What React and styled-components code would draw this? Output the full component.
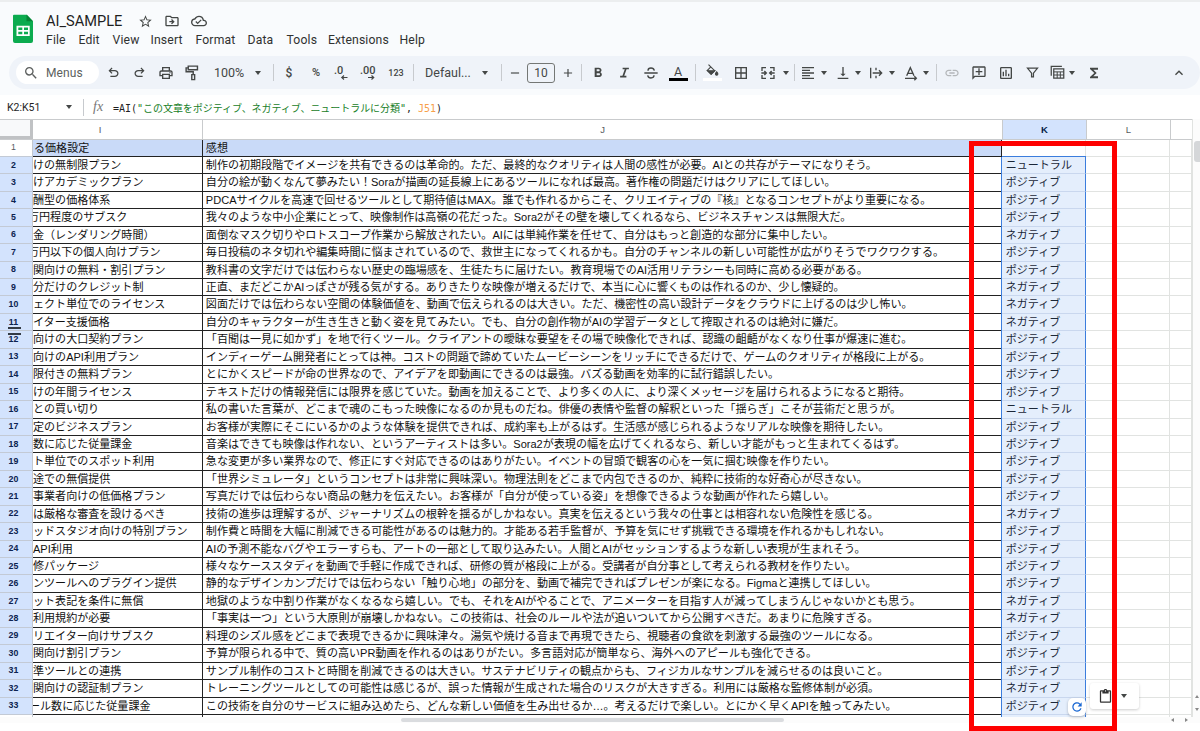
import React from "react";
import styled, { createGlobalStyle } from "styled-components";
import {
  MdAdd,
  MdBorderAll,
  MdContentPaste,
  MdFormatAlignLeft,
  MdFormatBold,
  MdFunctions,
  MdKeyboardArrowUp,
  MdLink,
  MdOutlineAddComment,
  MdOutlineCloudDone,
  MdOutlineDriveFileMove,
  MdOutlineInsertChart,
  MdOutlinePrint,
  MdRefresh,
  MdRemove,
  MdSearch,
  MdStarBorder,
  MdVerticalAlignBottom,
} from "react-icons/md";

const color = {
  ink: "#444746",
  line: "#e1e3e1",
  select: "#d3e3fd",
  blue: "#3b7ddd",
};

const ROW = 17.44;

const GlobalStyle = createGlobalStyle`
  * {
    box-sizing: border-box;
  }

  body {
    margin: 0;
    background: #fff;
    overflow: hidden;
    font-family: Roboto, "Noto Sans CJK JP", sans-serif;
  }
`;

const Page = styled.div`
  position: relative;
  width: 1200px;
  height: 731px;
  display: flex;
  flex-direction: column;
  overflow: hidden;
`;

const Top = styled.header`
  height: 95px;
  flex: none;
  background: #f9fbfd;
  border-top: 2px solid #eceeef;
`;

const TitleArea = styled.div`
  display: flex;
  height: 54px;
  padding: 10px 0 0 12px;
`;

const TitleText = styled.div`
  margin-left: 12px;
  color: #1f1f1f;
`;

const TitleLine = styled.div`
  display: flex;
  align-items: center;
  height: 18px;
  gap: 11px;

  svg {
    color: ${color.ink};
  }
`;

const FileName = styled.span`
  width: 81px;
  font-size: 14.6px;
  white-space: nowrap;
`;

const MenuLine = styled.nav`
  display: flex;
  height: 20px;
  align-items: center;
  font-size: 12.2px;
  color: #303231;
`;

const MenuItem = styled.span`
  width: ${({ $w }) => $w}px;
  letter-spacing: 0.15px;
`;

const ToolBar = styled.div`
  display: flex;
  align-items: center;
  height: 33px;
  margin-left: 9px;
  padding-left: 7px;
  background: #eff3f9;
  border-radius: 17px;
  color: ${color.ink};
`;

const Search = styled.div`
  display: flex;
  align-items: center;
  width: 83px;
  height: 23px;
  padding-left: 7px;
  gap: 7px;
  background: #fff;
  border-radius: 12px;
  font-size: 12px;
  letter-spacing: 0.1px;
  color: #5c5f5e;
`;

const Tool = styled.span`
  display: flex;
  flex: none;
  align-items: center;
  justify-content: center;
  width: ${({ $w }) => $w || 16}px;
  height: 20px;
  margin-left: ${({ $gap }) => $gap}px;
  font-size: ${({ $size }) => $size || 12}px;
  font-weight: ${({ $bold }) => ($bold ? 500 : 400)};
  color: ${({ $dim }) => ($dim ? "#b4b7ba" : "inherit")};
  white-space: nowrap;

  svg {
    flex: none;
  }
`;

const Separator = styled.i`
  flex: none;
  width: 1px;
  height: 17px;
  margin-left: ${({ $gap }) => $gap}px;
  background: #c7cace;
`;

const Caret = styled.i`
  flex: none;
  width: 0;
  margin: 0 1px 0 ${({ $gap }) => $gap + 1}px;
  border: 3px solid transparent;
  border-top: 4px solid ${color.ink};
  border-bottom: 0;
`;

const FontSize = styled(Tool)`
  border: 1px solid #747775;
  border-radius: 3px;
`;

const Swatch = styled.span`
  display: flex;
  flex-direction: column;
  align-items: center;
  width: 19px;
  font-size: 12.5px;
  line-height: 13px;

  &::after {
    content: "";
    width: 100%;
    height: 3px;
    background: ${({ $fill }) => $fill};
  }
`;

const FormulaBar = styled.div`
  display: flex;
  align-items: center;
  flex: none;
  width: 1189px;
  height: 24px;
  background: #fff;
  font-size: 10.5px;
  color: #1f1f1f;
`;

const CellName = styled.span`
  width: 59px;
  padding-left: 7px;
`;

const Fx = styled.span`
  width: 20px;
  margin-left: 9px;
  font: italic 14px "Liberation Serif", serif;
  color: #777;
`;

const Formula = styled.span`
  font: 10px "DejaVu Sans Mono", "Noto Sans CJK JP", monospace;
  white-space: pre;
`;

const Quoted = styled.span`
  color: #188028;
  letter-spacing: -0.05px;
`;

const Ref = styled.span`
  color: #f7a04b;
`;

const SheetArea = styled.main`
  display: flex;
  flex: none;
  height: 598px;
  overflow: hidden;
`;

const Sheet = styled.div`
  position: relative;
  width: 1193px;
  border-right: 1px solid ${color.line};
  overflow: hidden;
`;

const HeadRow = styled.div`
  display: flex;
  height: 20.5px;
  border-top: 1px solid #c9cbcd;
  border-bottom: 1px solid #c9cbcd;
`;

const Corner = styled.div`
  width: 33px;
  background: #f8f9fa;
  border-right: 3px solid #c0c2c4;
  border-bottom: 3px solid #c0c2c4;
`;

const ColHead = styled.div`
  display: flex;
  align-items: center;
  justify-content: center;
  width: ${({ $w }) => $w}px;
  padding-right: ${({ $cut }) => $cut || 0}px;
  border-right: 1px solid #c9cbcd;
  background: ${({ $on }) => ($on ? color.select : "#fff")};
  color: ${({ $on }) => ($on ? "#041e49" : "#575b5f")};
  font: ${({ $on }) => ($on ? 700 : 400)} 9.5px "Liberation Sans", sans-serif;
`;

const Row = styled.div`
  display: flex;
  height: ${ROW}px;
`;

const RowHead = styled.div`
  display: flex;
  align-items: center;
  width: 33px;
  justify-content: center;
  padding: 0 5px 1px 0;
  border-right: 1px solid #c3c8d0;
  border-bottom: 1px solid #c3cad5;
  background: ${({ $on }) => ($on ? color.select : "#fff")};
  color: ${({ $on }) => ($on ? "#0c2350" : "#575b5f")};
  font: ${({ $on }) => ($on ? 700 : 400)} 8.8px "Liberation Sans", sans-serif;
`;

const Cell = styled.div`
  width: ${({ $w }) => $w}px;
  padding-left: ${({ $pad }) => $pad || 0}px;
  overflow: hidden;
  border-right: 1px solid ${({ $dark }) => ($dark ? "#222" : color.line)};
  border-bottom: 1px solid ${({ $dark }) => ($dark ? "#222" : color.line)};
  background: ${({ $head }) => ($head ? "#c9daf8" : "transparent")};
  color: #111;
  font: 11.06px/16.6px "Liberation Sans", "Noto Sans CJK JP", sans-serif;
  white-space: nowrap;
`;

const Shift = styled.span`
  margin-left: ${({ $x }) => $x}px;
`;

const Picked = styled(Cell)`
  border-right-color: ${color.blue};
  border-bottom-color: #c9d7ee;
  background: #e4eefc;
  color: #1b2738;
  box-shadow: -1px 0 0 ${color.blue}, ${({ $first }) => ($first ? `0 -1px 0 ${color.blue}` : "0 0 0 transparent")};
`;

const FreezeMark = styled.div`
  position: absolute;
  left: 8px;
  top: 208px;
  width: 13px;
  height: 8px;
  border-top: 2px solid #333b45;
  border-bottom: 2px solid #333b45;
`;

const VScroll = styled.div`
  display: flex;
  flex-direction: column;
  align-items: center;
  width: 7px;
  padding-top: 22px;
  background: #fcfcfc;
`;

const VThumb = styled.div`
  flex: none;
  width: 6px;
  height: 21px;
  margin-bottom: 533px;
  margin-left: 1px;
  border-radius: 3px 0 0 3px;
  background: #d5d7d9;
`;

const ScrollArrow = styled.i`
  flex: none;
  width: 0;
  margin-bottom: 10px;
  border: 2.5px solid transparent;
  border-top: ${({ $up }) => ($up ? "0" : "3px solid #888")};
  border-bottom: ${({ $up }) => ($up ? "3px solid #888" : "0")};
`;

const HScroll = styled.div`
  display: flex;
  align-items: center;
  height: 6px;
  padding-left: 401px;
  background: #fcfcfc;
`;

const HThumb = styled.div`
  width: 383px;
  height: 4px;
  margin-right: 387px;
  border-radius: 2px;
  background: #dadcdf;
`;

const SideArrow = styled.i`
  width: 0;
  margin-right: 11px;
  border: 2.5px solid transparent;
  border-left: ${({ $right }) => ($right ? "3px solid #888" : "0")};
  border-right: ${({ $right }) => ($right ? "0" : "3px solid #888")};
`;

const PasteChip = styled.div`
  position: absolute;
  left: 1090px;
  top: 683px;
  display: flex;
  align-items: center;
  width: 49px;
  height: 26px;
  padding-left: 8px;
  border-radius: 3px;
  background: #fff;
  box-shadow: 0 1px 3px rgba(0, 0, 0, 0.2);
  color: #333;
`;

const RefreshChip = styled.div`
  position: absolute;
  left: 1068px;
  top: 698px;
  display: flex;
  align-items: center;
  justify-content: center;
  width: 18px;
  height: 18px;
  border-radius: 5px;
  background: #fff;
  box-shadow: 0 1px 3px rgba(0, 0, 0, 0.25);
  color: #1967d2;
`;

const Highlight = styled.div`
  position: absolute;
  left: 969px;
  top: 141px;
  width: 148px;
  height: 590px;
  border: 5px solid #fe0000;
`;

const menus = [
  ["File", 32.5],
  ["Edit", 34],
  ["View", 38],
  ["Insert", 45],
  ["Format", 52],
  ["Data", 39],
  ["Tools", 41.5],
  ["Extensions", 71.5],
  ["Help", 30],
];

// [column I, column J, column K, shift of the cut off column I text]
const P = "ポジティブ";
const N = "ネガティブ";
const U = "ニュートラル";
const rows = [
  ["けの無制限プラン", "制作の初期段階でイメージを共有できるのは革命的。ただ、最終的なクオリティは人間の感性が必要。AIとの共存がテーマになりそう。", U],
  ["けアカデミックプラン", "自分の絵が動くなんて夢みたい！Soraが描画の延長線上にあるツールになれば最高。著作権の問題だけはクリアにしてほしい。", P],
  ["酬型の価格体系", "PDCAサイクルを高速で回せるツールとして期待値はMAX。誰でも作れるからこそ、クリエイティブの『核』となるコンセプトがより重要になる。", P],
  ["万円程度のサブスク", "我々のような中小企業にとって、映像制作は高嶺の花だった。Sora2がその壁を壊してくれるなら、ビジネスチャンスは無限大だ。", P, -5],
  ["金（レンダリング時間）", "面倒なマスク切りやロトスコープ作業から解放されたい。AIには単純作業を任せて、自分はもっと創造的な部分に集中したい。", N],
  ["万円以下の個人向けプラン", "毎日投稿のネタ切れや編集時間に悩まされているので、救世主になってくれるかも。自分のチャンネルの新しい可能性が広がりそうでワクワクする。", P, -5],
  ["関向けの無料・割引プラン", "教科書の文字だけでは伝わらない歴史の臨場感を、生徒たちに届けたい。教育現場でのAI活用リテラシーも同時に高める必要がある。", P],
  ["分だけのクレジット制", "正直、まだどこかAIっぽさが残る気がする。ありきたりな映像が増えるだけで、本当に心に響くものは作れるのか、少し懐疑的。", N],
  ["ェクト単位でのライセンス", "図面だけでは伝わらない空間の体験価値を、動画で伝えられるのは大きい。ただ、機密性の高い設計データをクラウドに上げるのは少し怖い。", N],
  ["イター支援価格", "自分のキャラクターが生き生きと動く姿を見てみたい。でも、自分の創作物がAIの学習データとして搾取されるのは絶対に嫌だ。", N],
  ["向けの大口契約プラン", "「百聞は一見に如かず」を地で行くツール。クライアントの曖昧な要望をその場で映像化できれば、認識の齟齬がなくなり仕事が爆速に進む。", P],
  ["向けのAPI利用プラン", "インディーゲーム開発者にとっては神。コストの問題で諦めていたムービーシーンをリッチにできるだけで、ゲームのクオリティが格段に上がる。", P],
  ["限付きの無料プラン", "とにかくスピードが命の世界なので、アイデアを即動画にできるのは最強。バズる動画を効率的に試行錯誤したい。", P],
  ["けの年間ライセンス", "テキストだけの情報発信には限界を感じていた。動画を加えることで、より多くの人に、より深くメッセージを届けられるようになると期待。", P],
  ["との買い切り", "私の書いた言葉が、どこまで魂のこもった映像になるのか見ものだね。俳優の表情や監督の解釈といった「揺らぎ」こそが芸術だと思うが。", U],
  ["定のビジネスプラン", "お客様が実際にそこにいるかのような体験を提供できれば、成約率も上がるはず。生活感が感じられるようなリアルな映像を期待したい。", P],
  ["数に応じた従量課金", "音楽はできても映像は作れない、というアーティストは多い。Sora2が表現の幅を広げてくれるなら、新しい才能がもっと生まれてくるはず。", P],
  ["ト単位でのスポット利用", "急な変更が多い業界なので、修正にすぐ対応できるのはありがたい。イベントの冒頭で観客の心を一気に掴む映像を作りたい。", P],
  ["途での無償提供", "「世界シミュレータ」というコンセプトは非常に興味深い。物理法則をどこまで内包できるのか、純粋に技術的な好奇心が尽きない。", P],
  ["事業者向けの低価格プラン", "写真だけでは伝わらない商品の魅力を伝えたい。お客様が「自分が使っている姿」を想像できるような動画が作れたら嬉しい。", P],
  ["は厳格な審査を設けるべき", "技術の進歩は理解するが、ジャーナリズムの根幹を揺るがしかねない。真実を伝えるという我々の仕事とは相容れない危険性を感じる。", N],
  ["ッドスタジオ向けの特別プラン", "制作費と時間を大幅に削減できる可能性があるのは魅力的。才能ある若手監督が、予算を気にせず挑戦できる環境を作れるかもしれない。", P],
  ["API利用", "AIの予測不能なバグやエラーすらも、アートの一部として取り込みたい。人間とAIがセッションするような新しい表現が生まれそう。", P],
  ["修パッケージ", "様々なケーススタディを動画で手軽に作成できれば、研修の質が格段に上がる。受講者が自分事として考えられる教材を作りたい。", P],
  ["ンツールへのプラグイン提供", "静的なデザインカンプだけでは伝わらない「触り心地」の部分を、動画で補完できればプレゼンが楽になる。Figmaと連携してほしい。", P],
  ["ット表記を条件に無償", "地獄のような中割り作業がなくなるなら嬉しい。でも、それをAIがやることで、アニメーターを目指す人が減ってしまうんじゃないかとも思う。", N],
  ["利用規約が必要", "「事実は一つ」という大原則が崩壊しかねない。この技術は、社会のルールや法が追いついてから公開すべきだ。あまりに危険すぎる。", N],
  ["リエイター向けサブスク", "料理のシズル感をどこまで表現できるかに興味津々。湯気や焼ける音まで再現できたら、視聴者の食欲を刺激する最強のツールになる。", P],
  ["関向け割引プラン", "予算が限られる中で、質の高いPR動画を作れるのはありがたい。多言語対応が簡単なら、海外へのアピールも強化できる。", P],
  ["準ツールとの連携", "サンプル制作のコストと時間を削減できるのは大きい。サステナビリティの観点からも、フィジカルなサンプルを減らせるのは良いこと。", P],
  ["関向けの認証制プラン", "トレーニングツールとしての可能性は感じるが、誤った情報が生成された場合のリスクが大きすぎる。利用には厳格な監修体制が必須。", N],
  ["ール数に応じた従量課金", "この技術を自分のサービスに組み込めたら、どんな新しい価値を生み出せるか…。考えるだけで楽しい。とにかく早くAPIを触ってみたい。", P, -4],
];

const Glyph = ({ size = 16, children }) => (
  <svg
    width={size}
    height={size}
    viewBox="0 0 24 24"
    fill="none"
    stroke="currentColor"
    strokeWidth="2"
  >
    {children}
  </svg>
);

const SheetsLogo = () => (
  <svg width="22" height="32" viewBox="0 0 22 32">
    <path d="M2 2.700h13l6 6.500V29a2 2 0 0 1-2 2H3a2 2 0 0 1-2-2V3.700a1 1 0 0 1 1-1z" fill="#0cab4f" />
    <path d="M14.500 2.700l6.500 6.500h-6.500z" fill="#078336" />
    <path
      d="M4.500 13.800h13.200v10.200H4.500zM6.300 15.600v2.300h4v-2.300zM12 15.600v2.300h4v-2.300zM6.300 19.800v2.400h4v-2.400zM12 19.800v2.400h4v-2.400z"
      fill="#fff"
      fillRule="evenodd"
    />
  </svg>
);

const Undo = ({ flip }) => (
  <Glyph size={15}>
    <path
      d="M7 19v-2h7.100q1.575 0 2.738-1T18 13.500 16.838 11 14.100 10H7.800l2.600 2.600L9 14 4 9l5-5 1.400 1.400L7.800 8h6.300q2.425 0 4.163 1.575T20 13.500t-1.737 3.925T14.100 19z"
      fill="currentColor"
      stroke="none"
      transform={flip ? "matrix(-1 0 0 1 24 0)" : undefined}
    />
  </Glyph>
);

const Decimals = ({ text, right }) => (
  <svg width="20" height="18" viewBox="0 0 20 18" fill="currentColor">
    <text x={right ? 2 : 3} y="10" fontSize="11" fontFamily="Roboto" fontWeight="500">
      {text}
    </text>
    <path
      d="M10 13.500h6M12.500 11.500l-2.200 2 2.200 2"
      fill="none"
      stroke="currentColor"
      strokeWidth="1.200"
      transform={right ? "matrix(-1 0 0 1 26 0)" : "translate(.5 0)"}
    />
  </svg>
);

const Tools = () => (
  <ToolBar>
    <Search>
      <MdSearch size={16} />
      Menus
    </Search>
    <Tool $gap={6}><Undo /></Tool>
    <Tool $gap={10}><Undo flip /></Tool>
    <Tool $gap={11}><MdOutlinePrint size={16} /></Tool>
    <Tool $gap={10}>
      <Glyph size={17}>
        <path d="M6 3h13v5H6zM6 5.500H3V11h10v4M11 15h4v7h-4z" />
      </Glyph>
    </Tool>
    <Tool $gap={12} $w={34} $size={12.5}>100%</Tool>
    <Caret $gap={8} />
    <Separator $gap={11} />
    <Tool $gap={7} $size={12} $bold>$</Tool>
    <Tool $gap={11} $size={11} $bold>%</Tool>
    <Tool $gap={7} $w={20}><Decimals text=".0" /></Tool>
    <Tool $gap={7} $w={20}><Decimals text=".00" right /></Tool>
    <Tool $gap={8} $w={20} $size={9} $bold>123</Tool>
    <Separator $gap={7} />
    <Tool $gap={11} $w={46} $size={12.5}>Defaul...</Tool>
    <Caret $gap={10} />
    <Separator $gap={12} />
    <Tool $gap={7} $w={12}><MdRemove size={14} /></Tool>
    <FontSize $gap={6} $w={28}>10</FontSize>
    <Tool $gap={7} $w={12}><MdAdd size={14} /></Tool>
    <Separator $gap={7} />
    <Tool $gap={8}><MdFormatBold size={16} /></Tool>
    <Tool $gap={10}>
      <Glyph size={15}>
        <path d="M9 5.500h10M5 18.500h10M14.500 5l-5 14" strokeWidth="2.600" />
      </Glyph>
    </Tool>
    <Tool $gap={11}>
      <Glyph>
        <path d="M2 12h20M17 8.500C16.500 6 14.500 4.500 12 4.500S7.500 6 7.500 8.500M7 15.500c.5 2.500 2.500 4 5 4s4.500-1.500 4.500-4" />
      </Glyph>
    </Tool>
    <Tool $gap={9} $w={20}><Swatch $fill="#000">A</Swatch></Tool>
    <Separator $gap={7} />
    <Tool $gap={6} $w={20}>
      <Swatch $fill="#fff">
        <Glyph size={14}>
          <path d="M6 1l10.500 10.500-6 6L4 11l6-6" />
          <path d="M4.500 11.500h12l-6 6z" fill="currentColor" />
          <path d="M20 13.500s-2 2.200-2 3.600a2 2 0 0 0 4 0c0-1.400-2-3.600-2-3.600z" fill="currentColor" />
        </Glyph>
      </Swatch>
    </Tool>
    <Tool $gap={11}><MdBorderAll size={16} /></Tool>
    <Tool $gap={11}>
      <Glyph>
        <path d="M9 4H3v5M15 4h6v5M9 20H3v-5M15 20h6v-5M2 12h7M22 12h-7M6.500 9l3 3-3 3M17.500 9l-3 3 3 3" />
      </Glyph>
    </Tool>
    <Caret $gap={6} />
    <Separator $gap={4} />
    <Tool $gap={5}><MdFormatAlignLeft size={16} /></Tool>
    <Caret $gap={4} />
    <Tool $gap={7}><MdVerticalAlignBottom size={16} /></Tool>
    <Caret $gap={3} />
    <Tool $gap={6}>
      <Glyph>
        <path d="M4 4v16M12 4v4M12 16v4M7 12h13M16.500 8l4 4-4 4" />
      </Glyph>
    </Tool>
    <Caret $gap={4} />
    <Tool $gap={7}>
      <Glyph>
        <path d="M5.500 16L11 4l5.500 12M7.500 12.500h7M3 20h17M17 17l3 3-3 3" />
      </Glyph>
    </Tool>
    <Caret $gap={3} />
    <Separator $gap={6} />
    <Tool $gap={7} $dim><MdLink size={16} /></Tool>
    <Tool $gap={11}>
      <MdOutlineAddComment size={16} transform="scale(-1 1)" />
    </Tool>
    <Tool $gap={11}><MdOutlineInsertChart size={16} /></Tool>
    <Tool $gap={10}>
      <Glyph size={15}>
        <path d="M4 5h16l-6.500 8v6h-3v-6z" />
      </Glyph>
    </Tool>
    <Tool $gap={8} $w={18}>
      <Glyph size={15}>
        <path d="M19 2H2v15M6 6h16v15H6z" />
        <path d="M6 11h16M6 16h16M11.500 11v10M16.500 11v10" strokeWidth="1.600" />
      </Glyph>
    </Tool>
    <Caret $gap={2} />
    <Tool $gap={10}><MdFunctions size={16} /></Tool>
    <Tool $gap={69}><MdKeyboardArrowUp size={16} /></Tool>
  </ToolBar>
);

const App = () => (
  <>
    <GlobalStyle />
    <Page>
      <Top>
        <TitleArea>
          <SheetsLogo />
          <TitleText>
            <TitleLine>
              <FileName>AI_SAMPLE</FileName>
              <MdStarBorder size={15} />
              <MdOutlineDriveFileMove size={16} />
              <MdOutlineCloudDone size={16} />
            </TitleLine>
            <MenuLine>
              {menus.map(([name, w]) => (
                <MenuItem key={name} $w={w}>{name}</MenuItem>
              ))}
            </MenuLine>
          </TitleText>
        </TitleArea>
        <Tools />
      </Top>

      <FormulaBar>
        <CellName>K2:K51</CellName>
        <Caret $gap={6} />
        <Separator $gap={10} />
        <Fx>fx</Fx>
        <Formula>
          =AI(<Quoted>"この文章をポジティブ、ネガティブ、ニュートラルに分類"</Quoted>, <Ref>J51</Ref>)
        </Formula>
      </FormulaBar>

      <SheetArea>
        <Sheet>
          <HeadRow>
            <Corner />
            <ColHead $w={170} $cut={35}>I</ColHead>
            <ColHead $w={800}>J</ColHead>
            <ColHead $w={84} $on>K</ColHead>
            <ColHead $w={84}>L</ColHead>
          </HeadRow>
          <Row>
            <RowHead>1</RowHead>
            <Cell $w={170} $dark $head><Shift $x={1}>る価格設定</Shift></Cell>
            <Cell $w={800} $pad={3} $dark $head>感想</Cell>
            <Cell $w={84} />
            <Cell $w={84} />
            <Cell $w={22} />
          </Row>
          {rows.map(([plan, comment, mood, shift], i) => (
            <Row key={i}>
              <RowHead $on>{i + 2}</RowHead>
              <Cell $w={170} $dark><Shift $x={shift || 0}>{plan}</Shift></Cell>
              <Cell $w={800} $pad={3} $dark>{comment}</Cell>
              <Picked $w={84} $pad={3.5} $first={i === 0}>{mood}</Picked>
              <Cell $w={84} />
              <Cell $w={22} />
            </Row>
          ))}
          <Row>
            <RowHead />
            <Cell $w={170} $dark />
            <Cell $w={800} $dark />
            <Picked $w={84} />
            <Cell $w={84} />
            <Cell $w={22} />
          </Row>
          <FreezeMark />
        </Sheet>
        <VScroll>
          <VThumb />
          <ScrollArrow $up />
          <ScrollArrow />
        </VScroll>
      </SheetArea>
      <HScroll>
        <HThumb />
        <SideArrow />
        <SideArrow $right />
      </HScroll>

      <PasteChip>
        <MdContentPaste size={15} />
        <Caret $gap={7} />
      </PasteChip>
      <RefreshChip>
        <MdRefresh size={14} />
      </RefreshChip>
      <Highlight />
    </Page>
  </>
);

export default App;
